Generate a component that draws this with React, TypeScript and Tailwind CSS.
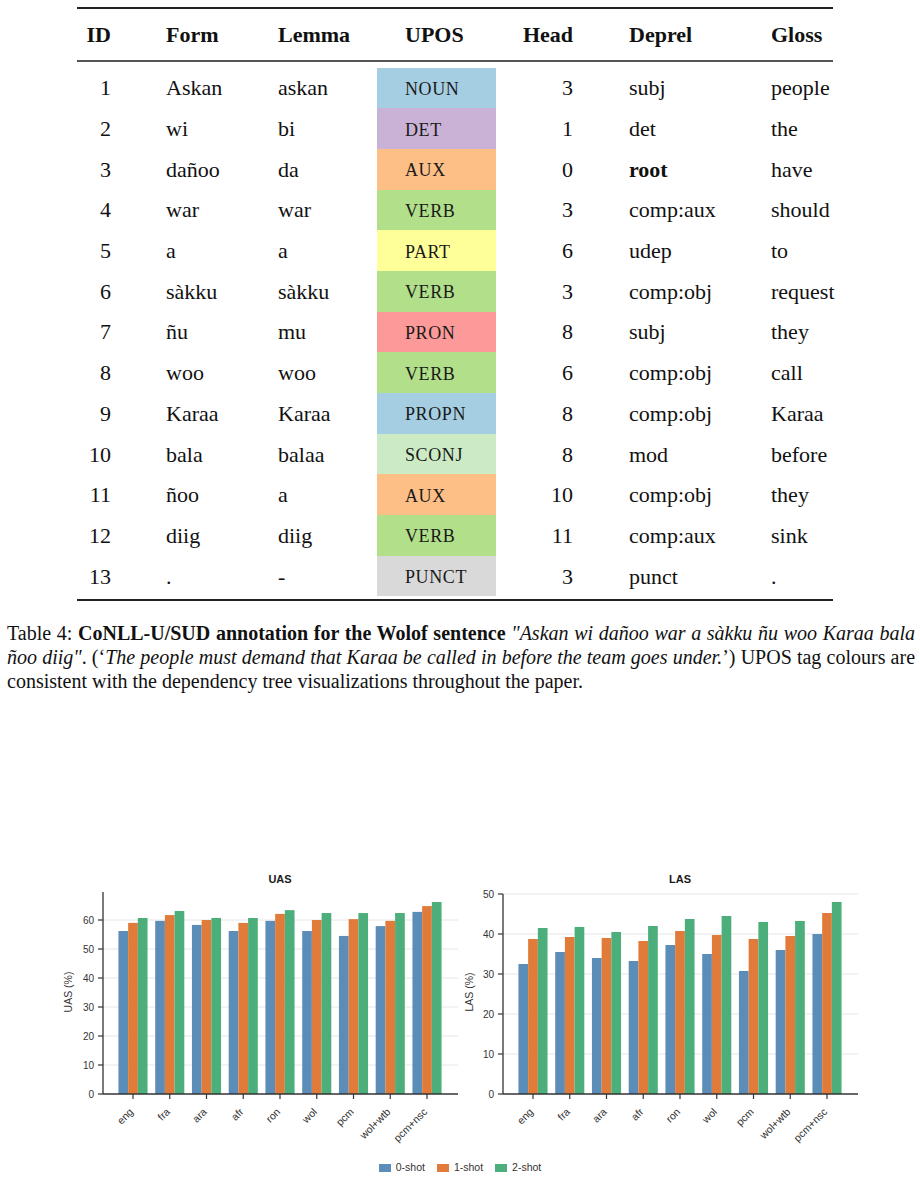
import React from "react";

type Row = {
  id: number;
  form: string;
  lemma: string;
  upos: string;
  head: number;
  deprel: string;
  gloss: string;
};

const ROWS: Row[] = [
  { id: 1, form: "Askan", lemma: "askan", upos: "NOUN", head: 3, deprel: "subj", gloss: "people" },
  { id: 2, form: "wi", lemma: "bi", upos: "DET", head: 1, deprel: "det", gloss: "the" },
  { id: 3, form: "dañoo", lemma: "da", upos: "AUX", head: 0, deprel: "root", gloss: "have" },
  { id: 4, form: "war", lemma: "war", upos: "VERB", head: 3, deprel: "comp:aux", gloss: "should" },
  { id: 5, form: "a", lemma: "a", upos: "PART", head: 6, deprel: "udep", gloss: "to" },
  { id: 6, form: "sàkku", lemma: "sàkku", upos: "VERB", head: 3, deprel: "comp:obj", gloss: "request" },
  { id: 7, form: "ñu", lemma: "mu", upos: "PRON", head: 8, deprel: "subj", gloss: "they" },
  { id: 8, form: "woo", lemma: "woo", upos: "VERB", head: 6, deprel: "comp:obj", gloss: "call" },
  { id: 9, form: "Karaa", lemma: "Karaa", upos: "PROPN", head: 8, deprel: "comp:obj", gloss: "Karaa" },
  { id: 10, form: "bala", lemma: "balaa", upos: "SCONJ", head: 8, deprel: "mod", gloss: "before" },
  { id: 11, form: "ñoo", lemma: "a", upos: "AUX", head: 10, deprel: "comp:obj", gloss: "they" },
  { id: 12, form: "diig", lemma: "diig", upos: "VERB", head: 11, deprel: "comp:aux", gloss: "sink" },
  { id: 13, form: ".", lemma: "-", upos: "PUNCT", head: 3, deprel: "punct", gloss: "." },
];

// tag colours, same as the dependency trees
const TAG_BG: Record<string, string> = {
  NOUN: "bg-[#a6cee3]",
  PROPN: "bg-[#a6cee3]",
  DET: "bg-[#cab2d6]",
  AUX: "bg-[#fdbf86]",
  VERB: "bg-[#b2df8a]",
  PART: "bg-[#ffff99]",
  PRON: "bg-[#fb9a99]",
  SCONJ: "bg-[#ccebc5]",
  PUNCT: "bg-[#d9d9d9]",
};

const COLS = "grid grid-cols-[63px_126px_111px_119px_104px_145px_88px]";

const LANGS = ["eng", "fra", "ara", "afr", "ron", "wol", "pcm", "wol+wtb", "pcm+nsc"];

const UAS = [
  [56.2, 59.0, 60.7],
  [59.7, 61.7, 63.1],
  [58.3, 60.0, 60.7],
  [56.2, 59.0, 60.7],
  [59.7, 62.1, 63.4],
  [56.2, 60.0, 62.4],
  [54.5, 60.3, 62.4],
  [57.9, 59.7, 62.4],
  [62.8, 64.8, 66.2],
];

const LAS = [
  [32.5, 38.75, 41.5],
  [35.5, 39.25, 41.75],
  [34.0, 39.0, 40.5],
  [33.25, 38.25, 42.0],
  [37.25, 40.75, 43.75],
  [35.0, 39.75, 44.5],
  [30.75, 38.75, 43.0],
  [36.0, 39.5, 43.25],
  [40.0, 45.25, 48.0],
];

const BAR_COLORS = ["#5b8db8", "#e07b3a", "#4caf7b"];
const BASE = 229;

type ChartProps = {
  title: string;
  ylabel: string;
  data: number[][];
  ticks: number[];
  unit: number;
  axisX: number;
  axisTop: number;
  gridEnd: number;
  firstCenter: number;
  titleX: number;
  labelX: number;
};

function BarChart({ title, ylabel, data, ticks, unit, axisX, axisTop, gridEnd, firstCenter, titleX, labelX }: ChartProps) {
  const y = (v: number) => BASE - v * unit;
  const bw = 9.7;
  return (
    <svg width={410} height={285} viewBox="0 0 410 285" fontFamily="'Liberation Sans', Arial, sans-serif">
      <text x={titleX} y={18} textAnchor="middle" fontSize={11} fontWeight={700} fill="#1a1a1a">
        {title}
      </text>
      {ticks.map((t) => (
        <g key={t}>
          {t > 0 && <line x1={axisX} x2={gridEnd} y1={y(t)} y2={y(t)} stroke="#e6e6e6" strokeWidth={1} />}
          <line x1={axisX - 5} x2={axisX} y1={y(t)} y2={y(t)} stroke="#333" strokeWidth={1.2} />
          <text x={axisX - 9} y={y(t) + 3.6} textAnchor="end" fontSize={10} fill="#333">
            {t}
          </text>
        </g>
      ))}
      {data.map((vals, i) => {
        const cx = firstCenter + i * 36.75;
        return (
          <g key={i}>
            {vals.map((v, j) => (
              <rect
                key={j}
                x={cx - 1.5 * bw + j * bw}
                y={y(v)}
                width={bw}
                height={BASE - y(v)}
                fill={BAR_COLORS[j]}
              />
            ))}
            <line x1={cx} x2={cx} y1={BASE} y2={BASE + 5} stroke="#333" strokeWidth={1.2} />
            <text
              transform={`translate(${cx + 1},${BASE + 18.5}) rotate(-45)`}
              textAnchor="end"
              fontSize={10.5}
              fill="#333"
            >
              {LANGS[i]}
            </text>
          </g>
        );
      })}
      <line x1={axisX} x2={axisX} y1={axisTop} y2={BASE} stroke="#333" strokeWidth={1.3} />
      <line x1={axisX} x2={gridEnd} y1={BASE} y2={BASE} stroke="#333" strokeWidth={1.3} />
      <text
        transform={`translate(${labelX},127) rotate(-90)`}
        textAnchor="middle"
        fontSize={10.5}
        fill="#333"
      >
        {ylabel}
      </text>
    </svg>
  );
}

export default function App() {
  return (
    <div className="w-[920px] bg-white pb-[20px] text-[#111] font-['Liberation_Serif',serif]">
      {/* Table */}
      <div className="ml-[77px] w-[756px] pt-[7px]">
        <div className="h-[2px] bg-[#222]" />
        <div className={`${COLS} h-[51px] items-center text-[22px] font-bold`}>
          <div className="pr-[29px] text-right">ID</div>
          <div className="pl-[26px]">Form</div>
          <div className="pl-[12px]">Lemma</div>
          <div className="pl-[28px]">UPOS</div>
          <div className="pr-[27px] text-right">Head</div>
          <div className="pl-[29px]">Deprel</div>
          <div className="pl-[26px]">Gloss</div>
        </div>
        <div className="h-[1.5px] bg-[#555]" />
        <div className="pt-[6px] pb-[3px]">
          {ROWS.map((r) => (
            <div key={r.id} className={`${COLS} h-[40.7px] items-center text-[22px]`}>
              <div className="pr-[29px] text-right">{r.id}</div>
              <div className="pl-[26px]">{r.form}</div>
              <div className="pl-[12px]">{r.lemma}</div>
              <div className={`flex self-stretch items-center pl-[28px] pt-[3px] text-[18px] tracking-[0.6px] text-[#1a1a1a] ${TAG_BG[r.upos]}`}>
                {r.upos}
              </div>
              <div className="pr-[27px] text-right">{r.head}</div>
              <div className={r.deprel === "root" ? "pl-[29px] font-bold" : "pl-[29px]"}>{r.deprel}</div>
              <div className="pl-[26px]">{r.gloss}</div>
            </div>
          ))}
        </div>
        <div className="h-[2px] bg-[#222]" />
      </div>

      {/* Caption (justified like the paper) */}
      <div className="mt-[20px] ml-[7px] w-[908px] text-[20px] leading-[24px]">
        <div className="text-justify [text-align-last:justify]">
          Table 4: <span className="font-bold">CoNLL-U/SUD annotation for the Wolof sentence</span>{" "}
          <span className="italic">"Askan wi dañoo war a sàkku ñu woo Karaa bala</span>
        </div>
        <div className="text-justify [text-align-last:justify]">
          <span className="italic">ñoo diig"</span>. (‘
          <span className="italic">The people must demand that Karaa be called in before the team goes under.</span>’)
          UPOS tag colours are
        </div>
        <div>consistent with the dependency tree visualizations throughout the paper.</div>
      </div>

      {/* Charts */}
      <div className="mt-[172px] flex pl-[50px]">
        <BarChart
          title="UAS"
          ylabel="UAS (%)"
          data={UAS}
          ticks={[0, 10, 20, 30, 40, 50, 60]}
          unit={2.9}
          axisX={53}
          axisTop={27}
          gridEnd={408}
          firstCenter={83}
          titleX={230}
          labelX={22}
        />
        <BarChart
          title="LAS"
          ylabel="LAS (%)"
          data={LAS}
          ticks={[0, 10, 20, 30, 40, 50]}
          unit={4}
          axisX={43}
          axisTop={29}
          gridEnd={398}
          firstCenter={73}
          titleX={220}
          labelX={13}
        />
      </div>

      {/* Legend */}
      <div className="mt-[10px] flex justify-center gap-[12px] font-['Liberation_Sans',Arial,sans-serif] text-[10.5px] text-[#333]">
        <div className="flex items-center gap-[5px]">
          <span className="h-[8px] w-[12px] bg-[#5b8db8]" />
          0-shot
        </div>
        <div className="flex items-center gap-[5px]">
          <span className="h-[8px] w-[12px] bg-[#e07b3a]" />
          1-shot
        </div>
        <div className="flex items-center gap-[5px]">
          <span className="h-[8px] w-[12px] bg-[#4caf7b]" />
          2-shot
        </div>
      </div>
    </div>
  );
}
